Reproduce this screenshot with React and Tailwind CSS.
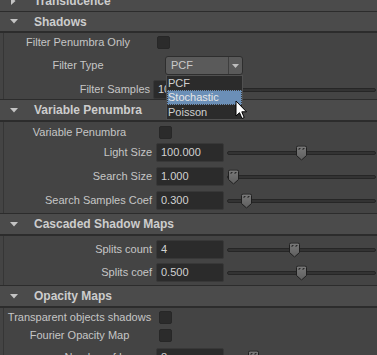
import React from "react";

function TriDown() {
  return (
    <svg width="8" height="5" viewBox="0 0 8 5" className="block">
      <path d="M0 0 H8 L4 4.5 Z" fill="#c4c4c4" />
    </svg>
  );
}
function TriRight() {
  return (
    <svg width="5" height="8" viewBox="0 0 5 8" className="block">
      <path d="M0 0 V8 L4.5 4 Z" fill="#c4c4c4" />
    </svg>
  );
}

function Header({ title, open = true, h = "h-[23px]" }) {
  return (
    <div className={`flex items-center ${h} bg-[#4b4b4b] border-t border-b-2 border-[#2c2c2c]`}>
      <div className="w-[34px] pl-[10px] flex items-center">{open ? <TriDown /> : <TriRight />}</div>
      <span className="text-[12px] font-bold text-[#cdcdcd] leading-none">{title}</span>
    </div>
  );
}

function Checkbox({ ml }) {
  return <div className={`${ml} w-[13px] h-[13px] shrink-0 bg-[#2b2b2b] rounded-[2px] border border-[#272727]`} />;
}

function CheckRow({ label, labelW = "w-[151px]", cbMl = "ml-[4px]", mt }) {
  return (
    <div className={`flex items-center h-[13px] ${mt}`}>
      <div className={`${labelW} shrink-0 text-center whitespace-nowrap`}>{label}</div>
      <Checkbox ml={cbMl} />
    </div>
  );
}

function Thumb({ left }) {
  return (
    <svg
      width="12"
      height="15"
      viewBox="0 0 12 15"
      className="absolute top-1/2 -translate-y-1/2"
      style={{ left }}
    >
      <defs>
        <linearGradient id="tg" x1="0" y1="0" x2="0" y2="1">
          <stop offset="0" stopColor="#7a7a7a" />
          <stop offset="1" stopColor="#5e5e5e" />
        </linearGradient>
      </defs>
      <path d="M2 0.5 H9 Q10.5 0.5 10.5 2 V10 L5.5 14.5 L0.5 10 V2 Q0.5 0.5 2 0.5 Z" fill="url(#tg)" stroke="#1f1f1f" />
      <path d="M3 4.5 V3 H4.5" fill="none" stroke="#2a2a2a" strokeWidth="1" />
      <path d="M7 4.5 V3 H8.5" fill="none" stroke="#2a2a2a" strokeWidth="1" />
    </svg>
  );
}

function Slider({ thumb, ml = "ml-[3px]" }) {
  return (
    <div className={`relative flex-1 ${ml} mr-[1px] h-full flex items-center`}>
      <div className="w-full h-[4px] rounded-[2px] bg-[#333333] border border-[#262626]" />
      {thumb !== undefined && <Thumb left={thumb} />}
    </div>
  );
}

function InputRow({ label, value, thumb, labelW = "w-[148px]", inMl = "ml-[4px]", mt }) {
  return (
    <div className={`flex items-center h-[19px] ${mt}`}>
      <div className={`${labelW} shrink-0 text-right whitespace-nowrap`}>{label}</div>
      <div className={`${inMl} w-[68px] h-[19px] shrink-0 bg-[#2b2b2b] rounded-[2px] border border-[#383838] flex items-center pl-[4px] text-[#d2d2d2]`}>
        {value}
      </div>
      <Slider thumb={thumb} />
    </div>
  );
}

function Content({ children, pb = "" }) {
  return (
    <div className={`ml-[3px] border-l border-[#363636] bg-[#444444] flex flex-col ${pb}`}>{children}</div>
  );
}

export default function App() {
  return (
    <div className="relative w-[377px] h-[355px] overflow-hidden bg-[#444444] text-[11px] text-[#c6c6c6] font-['Liberation_Sans',Arial,sans-serif] select-none">
      {/* Translucence (collapsed) */}
      <div className="flex items-center h-[20px] mt-[-9px] bg-[#4b4b4b]">
        <div className="w-[34px] pl-[11px] flex items-center"><TriRight /></div>
        <span className="text-[12px] font-bold text-[#cdcdcd] leading-none">Translucence</span>
      </div>

      {/* Shadows */}
      <Header title="Shadows" h="h-[22px]" />
      <Content>
        <CheckRow label="Filter Penumbra Only" labelW="w-[148px]" cbMl="ml-[5px]" mt="mt-[3px]" />
        <div className="flex items-center h-[19px] mt-[7px]">
          <div className="w-[148px] shrink-0 text-center whitespace-nowrap">Filter Type</div>
          <div className="ml-[13px] w-[78px] h-[19px] shrink-0 flex items-stretch bg-[#5a5a5a] rounded-[3px] border border-[#2e2e2e]">
            <div className="flex-1 flex items-center pl-[5px] text-[#cacaca]">PCF</div>
            <div className="w-[14px] border-l border-[#3e3e3e] flex items-center justify-center">
              <svg width="7" height="4" viewBox="0 0 7 4"><path d="M0 0 H7 L3.5 4 Z" fill="#bdbdbd" /></svg>
            </div>
          </div>
        </div>
        <InputRow label="Filter Samples" value="10" labelW="w-[146px]" inMl="ml-[3px]" mt="mt-[5px]" />
      </Content>

      {/* Variable Penumbra */}
      <Header title="Variable Penumbra" />
      <Content pb="pb-[3px]">
        <CheckRow label="Variable Penumbra" mt="mt-[4px]" />
        <InputRow label="Light Size" value="100.000" thumb={69} mt="mt-[4px]" />
        <InputRow label="Search Size" value="1.000" thumb={1} mt="mt-[5px]" />
        <InputRow label="Search Samples Coef" value="0.300" thumb={14} mt="mt-[5px]" />
      </Content>

      {/* Cascaded Shadow Maps */}
      <Header title="Cascaded Shadow Maps" />
      <Content pb="pb-[3px]">
        <InputRow label="Splits count" value="4" thumb={62} mt="mt-[4px]" />
        <InputRow label="Splits coef" value="0.500" thumb={69} mt="mt-[4px]" />
      </Content>

      {/* Opacity Maps */}
      <Header title="Opacity Maps" />
      <Content>
        <CheckRow label="Transparent objects shadows" mt="mt-[3px]" />
        <CheckRow label="Fourier Opacity Map" mt="mt-[5px]" />
        <InputRow label="Number of Layers" value="8" thumb={21} mt="mt-[6px]" />
        <div className="h-[20px]" />
      </Content>

      {/* Dropdown popup list */}
      <div className="absolute left-[166px] top-[75px] w-[77px] h-[45px] bg-[#2b2b2b] border border-[#505050] flex flex-col py-[0px] text-[#d0d0d0]">
        <div className="h-[14px] flex items-center pl-[1px]">PCF</div>
        <div className="h-[15px] flex items-center pl-[1px] bg-[#6b8fb7] outline-1 outline-dotted outline-[#3a3a3a] -outline-offset-1 text-[#e6e6e6]">Stochastic</div>
        <div className="h-[14px] flex items-center pl-[1px]">Poisson</div>
      </div>

      {/* Mouse cursor */}
      <svg width="13" height="20" viewBox="0 0 13 20" className="absolute left-[235px] top-[100px]">
        <path d="M1 1 V16 L4.5 12.7 L7 18.5 L9.2 17.5 L6.8 11.8 L11.5 11.8 Z" fill="#ffffff" stroke="#000000" strokeWidth="1" strokeLinejoin="miter" />
      </svg>
    </div>
  );
}
